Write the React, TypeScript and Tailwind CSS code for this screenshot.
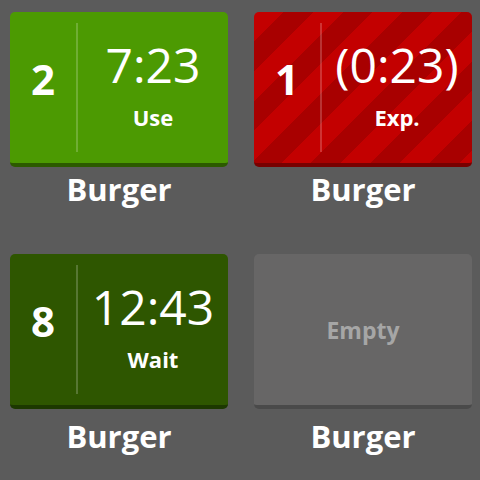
type Slot = {
  count?: number
  time?: string
  status?: string
  tone: "ready" | "expired" | "waiting" | "empty"
  label: string
}

const slots: Slot[] = [
  { count: 2, time: "7:23", status: "Use", tone: "ready", label: "Burger" },
  { count: 1, time: "(0:23)", status: "Exp.", tone: "expired", label: "Burger" },
  { count: 8, time: "12:43", status: "Wait", tone: "waiting", label: "Burger" },
  { tone: "empty", label: "Burger" },
]

const toneClass = {
  ready: "bg-[#4c9a02] border-[#2c5a00]",
  expired:
    "bg-[repeating-linear-gradient(135deg,#c30000_0_21px,#a80000_21px_42px)] border-[#780000]",
  waiting: "bg-[#2e5600] border-[#1c3800]",
  empty: "bg-[#676666] border-[#4a4a4a]",
}

function SlotCard({ slot }: { slot: Slot }) {
  if (slot.tone === "empty") {
    return (
      <div className={`flex h-[155px] items-center justify-center rounded-[5px] border-b-4 ${toneClass.empty}`}>
        <span className="pt-[2px] text-[23px] leading-none font-bold text-[#a6a6a6]">Empty</span>
      </div>
    )
  }

  return (
    <div className={`flex h-[155px] rounded-[5px] border-b-4 ${toneClass[slot.tone]}`}>
      {/* count */}
      <div className="flex w-[66px] items-center justify-center pb-[18px]">
        <span className="text-[42px] leading-none font-bold text-white">{slot.count}</span>
      </div>
      <div className="my-[11px] w-[2px] bg-white/20" />
      {/* timer */}
      <div className="flex flex-1 flex-col items-center justify-center pb-[7px] text-white">
        <span className="text-[48px] leading-none font-normal">{slot.time}</span>
        <span className="mt-[17px] text-[22px] leading-none font-bold">{slot.status}</span>
      </div>
    </div>
  )
}

export default function App() {
  return (
    <div className="h-[480px] w-[480px] overflow-hidden bg-[#5b5b5b] pt-[12px] pr-[8px] pl-[10px] font-['Open_Sans',sans-serif]">
      <div className="grid grid-cols-2 gap-x-[26px] gap-y-[49px]">
        {slots.map((slot, i) => (
          <div key={i} className="flex flex-col">
            <SlotCard slot={slot} />
            <div
              className={`text-center text-[31px] leading-none font-bold text-white ${i < 2 ? "mt-[7px]" : "mt-[12px]"}`}
            >
              {slot.label}
            </div>
          </div>
        ))}
      </div>
    </div>
  )
}
